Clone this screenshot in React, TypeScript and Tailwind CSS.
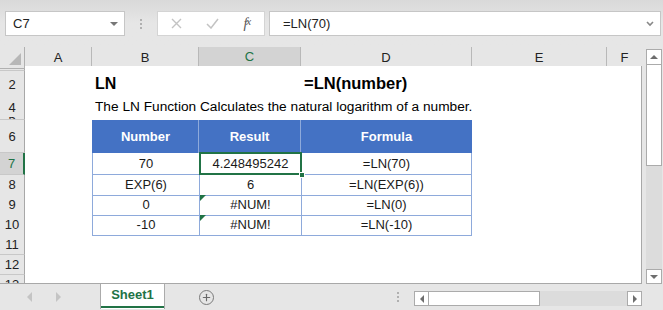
import { Plus } from 'lucide-react';

const font = { fontFamily: '"Liberation Sans", Arial, sans-serif' };

const cols = 'grid grid-cols-[25px_67px_107px_102px_171px_135px_35px]';

interface RowDef {
  label: string;
  h: string;
  selected?: boolean;
  cells?: React.ReactNode[];
}

const blueBorder = 'border-[#8eaadb]';

function BodyCells({ num, result, formula, selected, flag }: { num: string; result: string; formula: string; selected?: boolean; flag?: boolean }) {
  return [
    <div key="b" className={`border-l border-b ${blueBorder} flex items-center justify-center text-[13px] text-[#1a1a1a]`}>{num}</div>,
    <div key="c" className={`relative border-l border-b ${blueBorder} flex items-center justify-center text-[13px] text-[#1a1a1a]`}>
      {flag && <span className="absolute left-0 top-0 w-0 h-0 border-t-[6px] border-t-[#217346] border-r-[6px] border-r-transparent" />}
      {selected && (
        <>
          <span className="absolute -left-px -top-px -right-px -bottom-px border-2 border-[#217346]" />
          <span className="absolute -right-[4px] -bottom-[4px] w-[6px] h-[6px] bg-[#217346] border border-white" />
        </>
      )}
      <span className="relative">{result}</span>
    </div>,
    <div key="d" className={`border-l border-r border-b ${blueBorder} flex items-center justify-center text-[13px] text-[#1a1a1a]`}>{formula}</div>,
  ];
}

export default function App() {
  const rows: RowDef[] = [
    { label: '', h: 'h-[5px]' },
    {
      label: '2',
      h: 'h-[26px]',
      cells: [
        <div key="b" className="pl-[3px] pb-[3px] flex items-end font-bold text-[16px] text-black whitespace-nowrap">LN</div>,
        <div key="c" />,
        <div key="d" className="pl-[3px] pb-[3px] flex items-end font-bold text-[16.5px] text-black whitespace-nowrap">=LN(number)</div>,
      ],
    },
    {
      label: '4',
      h: 'h-[20px]',
      cells: [
        <div key="b" className="pl-[3px] pb-[1px] flex items-end text-[13.7px] text-black whitespace-nowrap overflow-visible">
          The LN Function Calculates the natural logarithm of a number.
        </div>,
      ],
    },
    { label: '5', h: 'h-[3px]' },
    {
      label: '6',
      h: 'h-[33px]',
      cells: ['Number', 'Result', 'Formula'].map((t, i) => (
        <div
          key={t}
          className={`bg-[#4472c4] flex items-center justify-center font-bold text-[13px] text-white ${i < 2 ? 'border-r border-[#8eaadb]' : ''} ${i === 0 ? 'border-l border-l-[#4472c4]' : ''}`}
        >
          {t}
        </div>
      )),
    },
    { label: '7', h: 'h-[22px]', selected: true, cells: BodyCells({ num: '70', result: '4.248495242', formula: '=LN(70)', selected: true }) },
    { label: '8', h: 'h-[20px]', cells: BodyCells({ num: 'EXP(6)', result: '6', formula: '=LN(EXP(6))' }) },
    { label: '9', h: 'h-[20px]', cells: BodyCells({ num: '0', result: '#NUM!', formula: '=LN(0)', flag: true }) },
    { label: '10', h: 'h-[20px]', cells: BodyCells({ num: '-10', result: '#NUM!', formula: '=LN(-10)', flag: true }) },
    { label: '11', h: 'h-[20px]' },
    { label: '12', h: 'h-[20px]' },
    { label: '13', h: 'h-[20px]' },
  ];

  return (
    <div className="w-[663px] h-[310px] bg-[#e6e6e6] flex flex-col overflow-hidden select-none" style={font}>
      {/* Formula bar */}
      <div className="h-[47px] shrink-0 bg-gradient-to-b from-[#d9d9d9] via-[#e6e6e6] to-[#e6e6e6] flex items-start pt-[11px] pl-[5px]">
        <div className="w-[120px] h-[25px] bg-white border border-[#c6c6c6] flex items-center pl-[7px] pr-[6px] text-[13px] text-[#222]">
          <span className="flex-1">C7</span>
          <span className="w-0 h-0 border-l-[4px] border-r-[4px] border-t-[4px] border-l-transparent border-r-transparent border-t-[#777]" />
        </div>
        <div className="w-[32px] h-[25px] flex flex-col items-center justify-center gap-[2px]">
          <span className="w-[2px] h-[2px] bg-[#b0b0b0]" />
          <span className="w-[2px] h-[2px] bg-[#b0b0b0]" />
          <span className="w-[2px] h-[2px] bg-[#b0b0b0]" />
        </div>
        <div className="w-[108px] h-[25px] bg-white border border-[#d4d4d4] flex items-center">
          <div className="w-[38px] flex justify-center">
            <svg width="11" height="11" viewBox="0 0 11 11">
              <path d="M1 1 L10 10 M10 1 L1 10" stroke="#c3c3c3" strokeWidth="1.4" fill="none" />
            </svg>
          </div>
          <div className="w-[36px] flex justify-center">
            <svg width="13" height="11" viewBox="0 0 13 11">
              <path d="M1 6 L5 10 L12 1" stroke="#c3c3c3" strokeWidth="1.5" fill="none" />
            </svg>
          </div>
          <div className="w-[34px] flex justify-center italic text-[14px] text-[#555]" style={{ fontFamily: '"Liberation Serif", serif' }}>
            f<span className="text-[11px] -ml-[1px] italic">x</span>
          </div>
        </div>
        <div className="ml-[4px] w-[392px] h-[25px] bg-white border border-[#c6c6c6] flex items-center pl-[13px] pr-[6px] text-[13px] text-[#222]">
          <span className="flex-1">=LN(70)</span>
          <svg width="8" height="6" viewBox="0 0 8 6">
            <path d="M1 1 L4 4 L7 1" stroke="#888" strokeWidth="1.6" fill="none" />
          </svg>
        </div>
      </div>

      {/* Sheet + vertical scrollbar */}
      <div className="h-[237px] shrink-0 flex">
        <div className="w-[642px] flex flex-col">
          {/* Column headers */}
          <div className={`${cols} h-[19px] shrink-0 text-[13px] text-[#222]`}>
            <div className="relative border-r border-b border-[#b0b0b0]">
              <span className="absolute right-[3px] bottom-[3px] w-0 h-0 border-l-[12px] border-l-transparent border-b-[12px] border-b-[#b7b7b7]" />
            </div>
            {['A', 'B', 'C', 'D', 'E', 'F'].map((c) => (
              <div
                key={c}
                className={`flex items-center justify-center ${c !== 'F' ? 'border-r border-[#b8b8b8]' : ''} ${
                  c === 'C' ? 'bg-[#d3d3d3] text-[#217346] border-b-2 border-b-[#217346]' : 'border-b border-b-[#a8a8a8]'
                }`}
              >
                {c}
              </div>
            ))}
          </div>
          {/* Rows */}
          <div className="flex-1 overflow-hidden bg-white border-r border-b border-[#a8a8a8]">
            {rows.map((r, idx) => (
              <div key={idx} className={`${cols} ${r.h} overflow-visible`}>
                <div
                  className={`flex items-center justify-center overflow-hidden text-[13px] leading-none ${
                    r.selected
                      ? 'bg-[#d3d3d3] text-[#217346] border-r-2 border-r-[#217346]'
                      : 'bg-[#e6e6e6] text-[#222] border-r border-r-[#a8a8a8]'
                  } border-b border-b-[#c8c8c8]`}
                >
                  {r.label}
                </div>
                <div />
                {r.cells ? (
                  r.cells.length === 1 ? (
                    <div className="col-span-3 flex">{r.cells[0]}</div>
                  ) : (
                    r.cells
                  )
                ) : null}
              </div>
            ))}
          </div>
        </div>
        <div className="w-[4px]" />
        <div className="w-[16px] flex flex-col pt-[2px] bg-[#e6e6e6]">
          <div className="h-[16px] bg-white border border-[#ababab] flex items-center justify-center">
            <span className="w-0 h-0 border-l-[4px] border-r-[4px] border-b-[4px] border-l-transparent border-r-transparent border-b-[#6e6e6e]" />
          </div>
          <div className="h-[101px] bg-white border-x border-b border-[#ababab]" />
          <div className="flex-1 bg-[#dcdcdc]" />
          <div className="h-[15px] bg-white border border-[#ababab] flex items-center justify-center">
            <span className="w-0 h-0 border-l-[4px] border-r-[4px] border-t-[4px] border-l-transparent border-r-transparent border-t-[#6e6e6e]" />
          </div>
        </div>
      </div>

      {/* Sheet tabs + horizontal scrollbar */}
      <div className="h-[26px] shrink-0 flex items-start">
        <div className="w-[100px] h-[26px] flex items-center">
          <span className="ml-[27px] w-0 h-0 border-t-[5px] border-b-[5px] border-r-[5px] border-t-transparent border-b-transparent border-r-[#c4c4c4]" />
          <span className="ml-[24px] w-0 h-0 border-t-[5px] border-b-[5px] border-l-[5px] border-t-transparent border-b-transparent border-l-[#c4c4c4]" />
        </div>
        <div className="w-[65px] h-[25px] bg-white border-x border-[#ababab] flex flex-col">
          <div className="flex-1 flex items-center justify-center font-bold text-[13px] text-[#217346]">Sheet1</div>
          <div className="h-[2px] bg-[#217346] mb-[1px]" />
        </div>
        <div className="w-[82px] h-[26px] flex items-center justify-center">
          <span className="w-[15px] h-[15px] rounded-full border border-[#7a7a7a] flex items-center justify-center">
            <Plus className="w-[11px] h-[11px] text-[#6a6a6a]" strokeWidth={2.5} />
          </span>
        </div>
        <div className="w-[168px] h-[26px] flex flex-col items-end justify-center gap-[2px] pr-[16px]">
          <span className="w-[2px] h-[2px] bg-[#b0b0b0]" />
          <span className="w-[2px] h-[2px] bg-[#b0b0b0]" />
          <span className="w-[2px] h-[2px] bg-[#b0b0b0]" />
        </div>
        <div className="ml-[-1px] mt-[7px] w-[228px] h-[15px] flex">
          <div className="w-[15px] bg-white border border-[#ababab] flex items-center justify-center">
            <span className="w-0 h-0 border-t-[4px] border-b-[4px] border-r-[4px] border-t-transparent border-b-transparent border-r-[#6e6e6e]" />
          </div>
          <div className="w-[111px] bg-white border-y border-r border-[#ababab]" />
          <div className="flex-1 bg-[#dcdcdc]" />
          <div className="w-[15px] bg-white border border-[#ababab] flex items-center justify-center">
            <span className="w-0 h-0 border-t-[4px] border-b-[4px] border-l-[4px] border-t-transparent border-b-transparent border-l-[#6e6e6e]" />
          </div>
        </div>
      </div>
    </div>
  );
}
